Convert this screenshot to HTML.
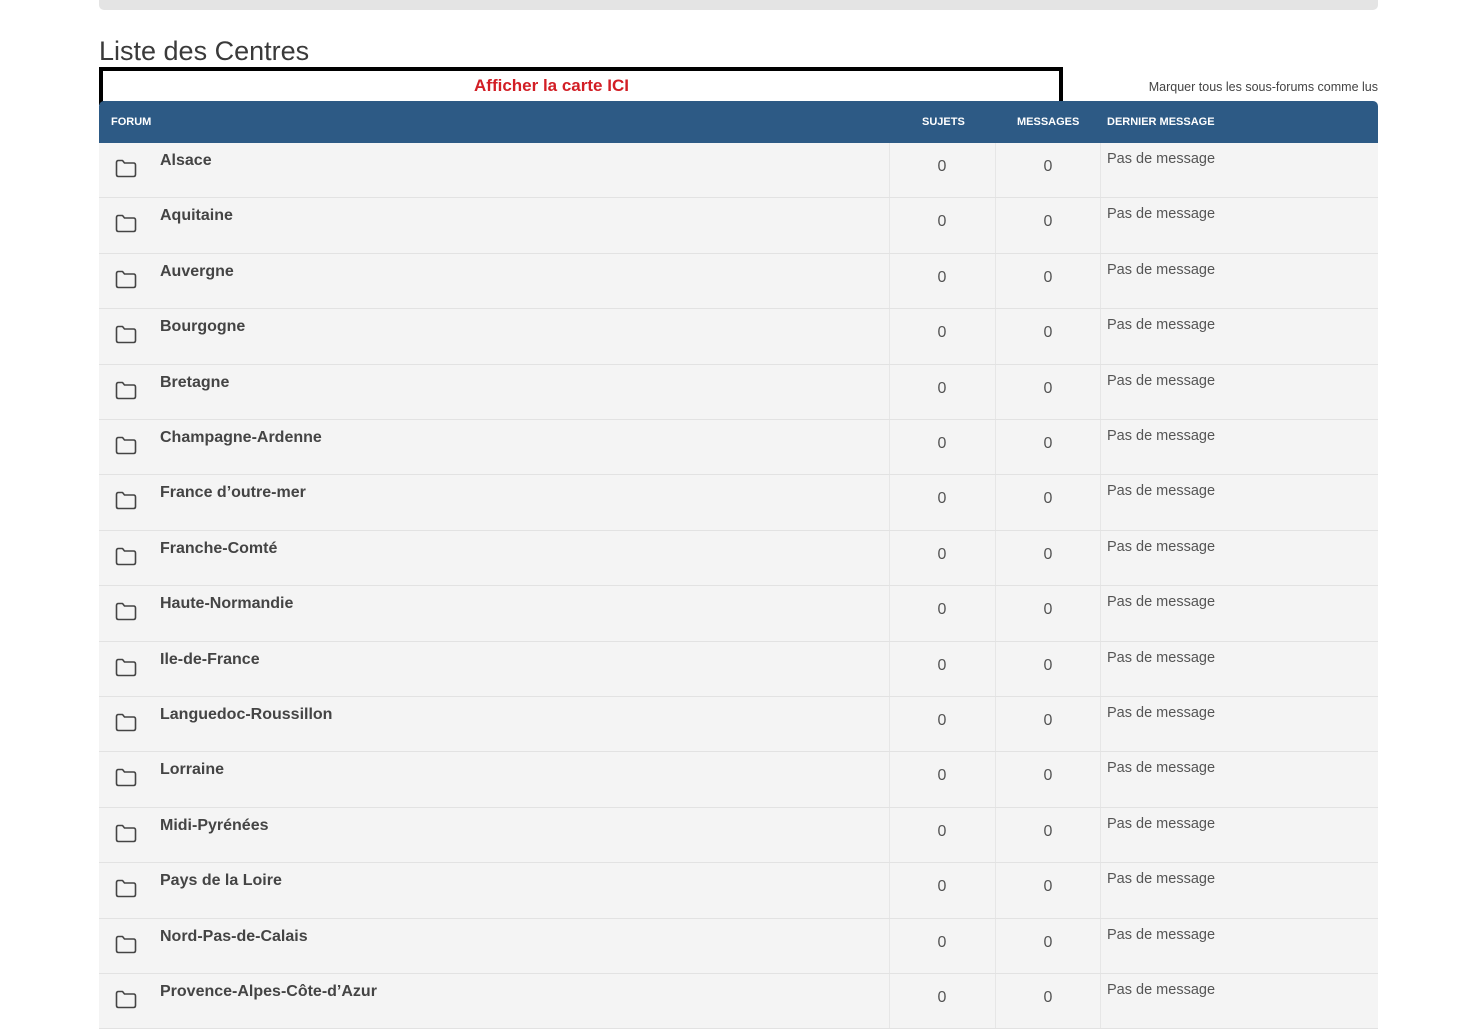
<!DOCTYPE html>
<html><head><meta charset="utf-8"><style>
body{margin:0;width:1463px;height:1025px;overflow:hidden;background:#fff;font-family:"Liberation Sans",Arial,sans-serif;position:relative}
.top{position:absolute;left:99px;top:0;width:1279px;height:10px;background:#e4e4e4;border-radius:0 0 5px 5px}
h1{position:absolute;left:99px;top:36px;margin:0;font-weight:normal;font-size:27px;color:#3a3a3a;font-family:"Liberation Sans",sans-serif}
.map{position:absolute;left:99px;top:67px;width:956px;height:30px;border:4px solid #000;background:#fff;color:#d21e25;font-weight:bold;font-size:17px;line-height:30px}
.map span{position:absolute;left:371px}
.mark{position:absolute;right:85px;top:80px;font-size:12.5px;color:#444}
.head{position:absolute;left:99px;top:101px;width:1279px;height:42px;background:#2d5a85;border-radius:5px 5px 0 0;color:#fff;font-size:11px;font-weight:bold}
.head span{position:absolute;top:15px}
.row{position:absolute;left:99px;width:1279px;height:55px;background:#f4f4f4;border-bottom:1px solid #e2e2e2;box-sizing:border-box}
.row .c{position:absolute;top:0;bottom:0;width:1px;background:#e6e6e6}
.row .n{position:absolute;left:61px;top:9px;font-size:16px;font-weight:bold;color:#444}
.row .z{position:absolute;top:15px;font-size:16px;color:#555;width:40px;text-align:center}
.row .p{position:absolute;left:1008px;top:8px;font-size:14.5px;color:#555}
.row svg{position:absolute;left:16px;top:16px}
</style></head><body>
<div class="top"></div>
<h1>Liste des Centres</h1>
<div class="map"><span>Afficher la carte ICI</span></div>
<div class="mark">Marquer tous les sous-forums comme lus</div>
<div class="head"><span style="left:12px">FORUM</span><span style="left:823px">SUJETS</span><span style="left:918px">MESSAGES</span><span style="left:1008px">DERNIER MESSAGE</span></div>
<div id="rows"></div>
<script>
var n=["Alsace","Aquitaine","Auvergne","Bourgogne","Bretagne","Champagne-Ardenne","France d’outre-mer","Franche-Comté","Haute-Normandie","Ile-de-France","Languedoc-Roussillon","Lorraine","Midi-Pyrénées","Pays de la Loire","Nord-Pas-de-Calais","Provence-Alpes-Côte-d’Azur"];
var h="";
for(var i=0;i<n.length;i++){var t=Math.round(143+i*55.4);
h+='<div class="row" style="top:'+t+'px;height:'+(Math.round(143+(i+1)*55.4)-t)+'px"><svg width="22" height="19" viewBox="0 0 22 19"><path d="M1.5 3.5 Q1.5 1.5 3.5 1.5 H7.5 L9.5 4 H18.5 Q20.5 4 20.5 6 V15.5 Q20.5 17.5 18.5 17.5 H3.5 Q1.5 17.5 1.5 15.5 Z" fill="none" stroke="#444" stroke-width="1.6" stroke-linejoin="round"/></svg><div class="n">'+n[i]+'</div><div class="c" style="left:790px"></div><div class="c" style="left:896px"></div><div class="c" style="left:1001px"></div><div class="z" style="left:823px">0</div><div class="z" style="left:929px">0</div><div class="p">Pas de message</div></div>';}
document.getElementById("rows").innerHTML=h;
</script>
</body></html>
